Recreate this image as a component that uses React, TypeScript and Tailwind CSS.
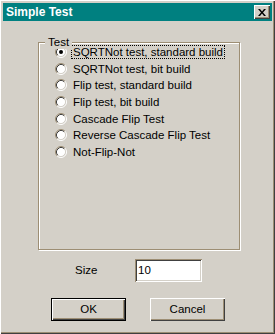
import React from "react";

const options = [
  "SQRTNot test, standard build",
  "SQRTNot test, bit build",
  "Flip test, standard build",
  "Flip test, bit build",
  "Cascade Flip Test",
  "Reverse Cascade Flip Test",
  "Not-Flip-Not",
];

function Radio({ checked }: { checked: boolean }) {
  return (
    <svg width="12" height="12" viewBox="0 0 12 12" className="shrink-0">
      <circle cx="6" cy="6" r="4.5" fill="#ffffff" />
      <path d="M2.11 9.89 A5.5 5.5 0 0 1 9.89 2.11" fill="none" stroke="#9d8e74" />
      <path d="M9.89 2.11 A5.5 5.5 0 0 1 2.11 9.89" fill="none" stroke="#ffffff" />
      <path d="M2.82 9.18 A4.5 4.5 0 0 1 9.18 2.82" fill="none" stroke="#404040" />
      <path d="M9.18 2.82 A4.5 4.5 0 0 1 2.82 9.18" fill="none" stroke="#d4d0c8" />
      {checked && <circle cx="6" cy="6" r="2" fill="#000000" />}
    </svg>
  );
}

export default function App() {
  const [sel, setSel] = React.useState(0);
  return (
    <div
      className="w-[275px] h-[334px] bg-[#d4d0c8] p-[3px] flex flex-col text-[11px] text-black shadow-[inset_1px_1px_0_#ffffff,inset_-1px_-1px_0_#404040,inset_-2px_-2px_0_#9d8e74]"
      style={{ fontFamily: '"Liberation Sans", Arial, sans-serif' }}
    >
      {/* title bar */}
      <div className="h-[18px] bg-[#008080] flex items-center justify-between pl-[3px] pr-[2px]">
        <span className="text-white font-bold text-[12px] leading-none">Simple Test</span>
        <div className="w-[16px] h-[14px] bg-[#d4d0c8] flex items-center justify-center shadow-[inset_1px_1px_0_#ffffff,inset_-1px_-1px_0_#404040,inset_-2px_-2px_0_#9d8e74]">
          <svg width="8" height="7" viewBox="0 0 8 7">
            <path d="M0 0h2l2 2.5L6 0h2L5 3.5 8 7H6L4 4.5 2 7H0l3-3.5z" fill="#000" />
          </svg>
        </div>
      </div>

      {/* group box */}
      <div className="relative ml-[35px] mt-[21px] w-[202px] h-[208px] border border-[#9d8e74] shadow-[inset_1px_1px_0_#ffffff,1px_1px_0_#ffffff]">
        <span className="absolute left-[6px] top-[-7px] px-[3px] bg-[#d4d0c8] leading-[13px] text-[11.5px]">Test</span>
        <div className="flex flex-col pt-[1px] pl-[16px]">
          {options.map((o, i) => (
            <label
              key={o}
              className="flex items-center h-[16.6px] cursor-default"
              onClick={() => setSel(i)}
            >
              <Radio checked={sel === i} />
              <span
                className={`ml-[4px] px-[1px] leading-[12px] text-[11.5px] border border-dotted ${
                  sel === i ? "border-black" : "border-transparent"
                }`}
              >
                {o}
              </span>
            </label>
          ))}
        </div>
      </div>

      {/* size row */}
      <div className="flex items-center mt-[9px] ml-[72px]">
        <span className="w-[60px] text-[11.5px]">Size</span>
        <div className="w-[67px] h-[23px] bg-white flex items-center pl-[3px] text-[11.5px] shadow-[inset_1px_1px_0_#9d8e74,inset_-1px_-1px_0_#ffffff,inset_2px_2px_0_#404040,inset_-2px_-2px_0_#d4d0c8]">
          10
        </div>
      </div>

      {/* buttons */}
      <div className="flex mt-[16px] ml-[48px] gap-[24px] text-[11.5px]">
        <button className="w-[75px] h-[23px] border border-black bg-[#d4d0c8] shadow-[inset_1px_1px_0_#ffffff,inset_-1px_-1px_0_#404040,inset_-2px_-2px_0_#9d8e74]">
          OK
        </button>
        <button className="w-[75px] h-[23px] bg-[#d4d0c8] shadow-[inset_1px_1px_0_#ffffff,inset_-1px_-1px_0_#404040,inset_-2px_-2px_0_#9d8e74]">
          Cancel
        </button>
      </div>
    </div>
  );
}
